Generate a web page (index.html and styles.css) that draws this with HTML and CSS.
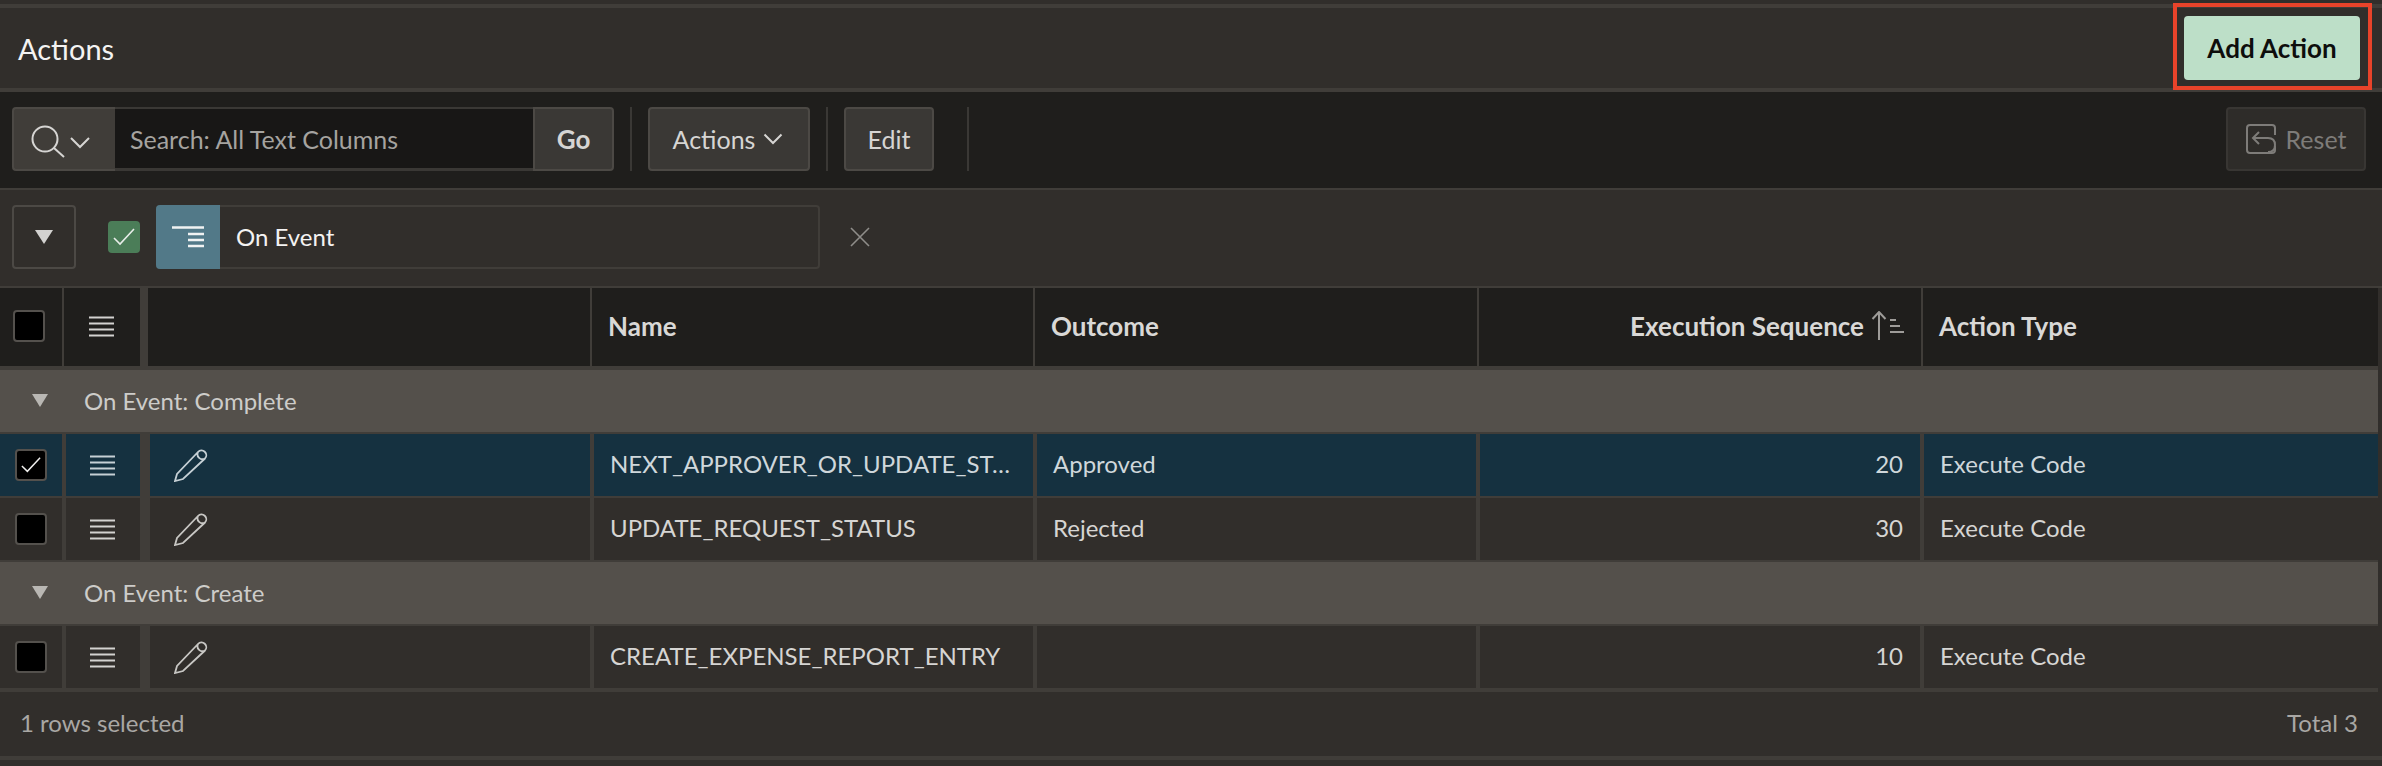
FILE: index.html
```html
<!DOCTYPE html>
<html lang="en">
<head>
<meta charset="utf-8">
<title>Actions</title>
<link rel="stylesheet" href="styles.css">
</head>
<body>
<section class="region">
  <header class="title-bar">
    <h2 class="title">Actions</h2>
    <div class="add-wrap">
      <button class="add-btn">Add Action</button>
      <span class="callout"></span>
    </div>
  </header>

  <div class="toolbar">
    <div class="search">
      <button class="search-btn">
        <svg class="ico-search" width="68" height="48" viewBox="0 0 68 48"><circle cx="21" cy="24" r="12.5"/><path d="M30 33 L40 42"/><path d="M47 23 L56 32 L65 23"/></svg>
      </button>
      <div class="search-input">Search: All Text Columns</div>
      <button class="btn go">Go</button>
    </div>
    <span class="tsep"></span>
    <button class="btn actions">Actions
      <svg class="chev" width="20" height="12" viewBox="0 0 20 12"><path d="M1.5 1.5 L10 10 L18.5 1.5"/></svg>
    </button>
    <span class="tsep"></span>
    <button class="btn edit">Edit</button>
    <span class="tsep wide"></span>
    <button class="btn reset">
      <svg class="ico-reset" width="30" height="30" viewBox="0 0 30 30"><path d="M15 1 H26 Q29 1 29 4 V11 M29 22 V26 Q29 29 26 29 H4 Q1 29 1 26 V4 Q1 1 4 1 H15"/><path d="M13 8 L7 14 L13 20 M7 14 H22 Q29 14 29 21 Q29 28 22 28"/></svg>
      Reset
    </button>
  </div>

  <div class="filters">
    <button class="collapse"><span class="tri"></span></button>
    <span class="green-check">
      <svg width="22" height="18" viewBox="0 0 22 18"><path d="M1 10 L7 16 L21 1"/></svg>
    </span>
    <div class="filter-chip">
      <span class="chip-icon">
        <svg width="34" height="22" viewBox="0 0 34 22"><path d="M1 1.5 H33 M17 8 H33 M17 14 H33 M17 20 H33"/></svg>
      </span>
      <span class="chip-text">On Event</span>
    </div>
    <svg class="close" width="20" height="20" viewBox="0 0 20 20"><path d="M1 1 L19 19 M19 1 L1 19"/></svg>
  </div>

  <div class="grid-row head">
    <div class="cell"><span class="box head-box"></span></div>
    <div class="cell center"><svg class="ico-menu" width="26" height="22" viewBox="0 0 26 22"><path d="M0 2.5 H25 M0 8.5 H25 M0 14.5 H25 M0 20.5 H25"/></svg></div>
    <div class="cell"></div>
    <div class="cell text">Name</div>
    <div class="cell text">Outcome</div>
    <div class="cell text right">Execution Sequence
      <svg class="ico-sort" width="34" height="30" viewBox="0 0 34 30"><path class="sort-a" d="M8 29 V1 M1.5 8 L8 1 L14.500 8"/><path class="sort-b" d="M19 9 H25 M19 15 H29 M19 21 H33"/></svg>
    </div>
    <div class="cell text">Action Type</div>
  </div>

  <div class="group"><span class="tri small"></span>On Event: Complete</div>

  <div class="grid-row data selected">
    <div class="cell"><span class="box"><svg width="22" height="18" viewBox="0 0 22 18"><path d="M1 10 L7 16 L21 1"/></svg></span></div>
    <div class="cell center"><svg class="ico-menu" width="26" height="22" viewBox="0 0 26 22"><path d="M0 2.5 H25 M0 8.5 H25 M0 14.5 H25 M0 20.500 H25"/></svg></div>
    <div class="cell pencil"><svg class="ico-pencil" width="34" height="34" viewBox="0 0 34 34"><path d="M1 33 L3 26 L24 4 A4.700 4.700 0 0 1 31 10.500 L9 31 Z M24 4 A5 5 0 0 0 31 10.500"/></svg></div>
    <div class="cell value ellipsis">NEXT_APPROVER_OR_UPDATE_STATUS</div>
    <div class="cell value">Approved</div>
    <div class="cell value right">20</div>
    <div class="cell value">Execute Code</div>
  </div>

  <div class="grid-row data">
    <div class="cell"><span class="box"></span></div>
    <div class="cell center"><svg class="ico-menu" width="26" height="22" viewBox="0 0 26 22"><path d="M0 2.5 H25 M0 8.5 H25 M0 14.5 H25 M0 20.500 H25"/></svg></div>
    <div class="cell pencil"><svg class="ico-pencil" width="34" height="34" viewBox="0 0 34 34"><path d="M1 33 L3 26 L24 4 A4.700 4.700 0 0 1 31 10.500 L9 31 Z M24 4 A5 5 0 0 0 31 10.500"/></svg></div>
    <div class="cell value ellipsis">UPDATE_REQUEST_STATUS</div>
    <div class="cell value">Rejected</div>
    <div class="cell value right">30</div>
    <div class="cell value">Execute Code</div>
  </div>

  <div class="group"><span class="tri small"></span>On Event: Create</div>

  <div class="grid-row data last">
    <div class="cell"><span class="box"></span></div>
    <div class="cell center"><svg class="ico-menu" width="26" height="22" viewBox="0 0 26 22"><path d="M0 2.5 H25 M0 8.5 H25 M0 14.5 H25 M0 20.500 H25"/></svg></div>
    <div class="cell pencil"><svg class="ico-pencil" width="34" height="34" viewBox="0 0 34 34"><path d="M1 33 L3 26 L24 4 A4.700 4.700 0 0 1 31 10.500 L9 31 Z M24 4 A5 5 0 0 0 31 10.500"/></svg></div>
    <div class="cell value ellipsis">CREATE_EXPENSE_REPORT_ENTRY</div>
    <div class="cell value"></div>
    <div class="cell value right">10</div>
    <div class="cell value">Execute Code</div>
  </div>

  <footer class="footer">
    <span>1 rows selected</span>
    <span>Total 3</span>
  </footer>
</section>
</body>
</html>
```

FILE: styles.css
```css
* { box-sizing: border-box; }
html, body { margin: 0; height: 100%; }
body {
  background: #312e2b;
  color: #d6d5d3;
  font-family: Lato, "Noto Sans", sans-serif;
  font-size: 24px;
  overflow: hidden;
}
button { font: inherit; color: inherit; margin: 0; cursor: pointer; }
svg { display: block; fill: none; stroke: currentColor; }

.region { padding-top: 4px; }

.title-bar {
  height: 88px;
  border-top: 4px solid #403d39;
  border-bottom: 4px solid #403d39;
  display: flex;
  align-items: center;
  justify-content: space-between;
  padding: 0 22px 0 18px;
}
.title { margin: 0; font-size: 29px; font-weight: 400; color: #f4f3f2; }
.add-wrap { position: relative; display: flex; }
.add-btn {
  width: 176px;
  height: 64px;
  background: #bddfc8;
  color: #0e0d0c;
  border: 0;
  border-radius: 4px;
  font-size: 26px;
  font-weight: 700;
  padding: 0;
}
.callout {
  position: absolute;
  left: -11px;
  top: -13px;
  width: 199px;
  height: 87px;
  border: 4px solid #e8432a;
}

.toolbar {
  height: 98px;
  background: #1f1e1c;
  border-bottom: 2px solid #403d39;
  display: flex;
  align-items: center;
  padding: 0 16px 2px 12px;
  font-size: 25px;
}
.search { display: flex; height: 64px; }
.search-btn {
  width: 103px;
  background: #403d39;
  border: 2px solid #4c4945;
  border-right: 0;
  border-radius: 4px 0 0 4px;
  padding: 0 0 0 10px;
  color: #d6d5d3;
  display: flex;
  align-items: center;
}
.ico-search { stroke-width: 2; flex: none; }
.search-input {
  width: 418px;
  background: #181716;
  border-top: 2px solid #3a3835;
  border-bottom: 3px solid #3a3835;
  color: #a5a3a0;
  display: flex;
  align-items: center;
  padding-left: 15px;
}
.btn {
  height: 64px;
  background: #3a3835;
  border: 2px solid #4c4945;
  border-radius: 4px;
  color: #d6d5d3;
  padding: 0;
  display: flex;
  align-items: center;
  justify-content: center;
}
.go { width: 81px; font-size: 26px; font-weight: 700; border-radius: 0 4px 4px 0; }
.tsep { width: 2px; height: 64px; background: #3a3835; margin: 0 16px; }
.tsep.wide { margin-left: 33px; }
.actions { width: 162px; gap: 8px; padding-right: 2px; }
.chev { stroke-width: 2; }
.edit { width: 90px; }
.reset {
  margin-left: auto;
  width: 140px;
  background: #2e2c29;
  border-color: #383633;
  color: #7e7c79;
  gap: 10px;
}
.ico-reset { stroke-width: 2; }

.filters {
  height: 98px;
  border-bottom: 2px solid #403d39;
  display: flex;
  align-items: center;
  padding: 0 0 2px 12px;
}
.collapse {
  width: 64px;
  height: 64px;
  background: transparent;
  border: 2px solid #4c4945;
  border-radius: 4px;
  padding: 0;
  display: flex;
  align-items: center;
  justify-content: center;
}
.tri {
  width: 0;
  height: 0;
  border-left: 9px solid transparent;
  border-right: 9px solid transparent;
  border-top: 14px solid #d3d2d0;
}
.green-check {
  width: 32px;
  height: 32px;
  margin-left: 32px;
  margin-right: 16px;
  background: #4b7d58;
  border-radius: 4px;
  color: #e8ede9;
  display: flex;
  align-items: center;
  justify-content: center;
}
.green-check svg, .box svg { stroke-width: 1.6; }
.filter-chip {
  width: 664px;
  height: 64px;
  display: flex;
  border: 2px solid #403d39;
  border-left: 0;
  border-radius: 4px;
}
.chip-icon {
  width: 64px;
  margin: -2px 0;
  background: #527988;
  border-radius: 4px 0 0 4px;
  color: #f0f2f2;
  display: flex;
  align-items: center;
  justify-content: center;
}
.chip-icon svg { stroke-width: 2.4; }
.chip-text {
  display: flex;
  align-items: center;
  padding: 0 0 2px 16px;
  color: #f4f3f2;
}
.close { margin-left: 30px; color: #8f8d8a; stroke-width: 1.6; }

.grid-row {
  display: grid;
  width: 2378px;
}
.cell {
  display: flex;
  align-items: center;
  border-right: 4px solid #403d39;
  min-width: 0;
}
.cell:last-child { border-right: 0; }
.center { justify-content: center; }
.right { justify-content: flex-end; }

.head {
  height: 82px;
  grid-template-columns: 64px 84px 444px 443px 444px 444px 455px;
  background: #1f1e1c;
  border-bottom: 4px solid #403d39;
  font-size: 26px;
}
.head .cell { border-right-width: 2px; padding-bottom: 2px; }
.head .cell:nth-child(2) { border-right-width: 8px; padding-right: 0; }
.head .cell:last-child { border-right: 0; }
.text { font-weight: 700; color: #d9d8d6; padding: 0 16px; }
.text.right { padding-right: 16px; gap: 7px; }
.ico-menu { stroke-width: 2; color: #d3d2d0; }
.ico-sort { color: #9e9c99; flex: none; }
.sort-a { stroke-width: 2; }
.sort-b { stroke-width: 2; }

.box {
  width: 32px;
  height: 32px;
  margin-left: 13px;
  background: #000;
  border: 2px solid #54514d;
  border-radius: 4px;
  display: flex;
  align-items: center;
  justify-content: center;
  color: #f0f0ef;
}
.box svg { width: 20px; }

.group {
  height: 64px;
  width: 2378px;
  background: #54504b;
  border-bottom: 2px solid #403d39;
  display: flex;
  align-items: center;
  color: #cdccc9;
  padding: 0 0 2px 32px;
}
.group .small {
  border-left-width: 8px;
  border-right-width: 8px;
  border-top-width: 13px;
  border-top-color: #b9b7b3;
  margin-right: 36px;
}

.data {
  height: 64px;
  grid-template-columns: 66px 84px 444px 443px 443px 444px 454px;
  border-bottom: 2px solid #403d39;
}
.data .cell:nth-child(2) { border-right-width: 10px; }
.data .box { margin-left: 15px; }
.selected { background: #153140; }
.selected .value { color: #cfd7db; }
.selected .ico-pencil, .selected .ico-menu { color: #c6d0d5; }
.pencil { padding-left: 24px; }
.ico-pencil { color: #c8c7c4; stroke-width: 1.8; }
.value { padding: 0 16px 3px; }
.value.right { padding-right: 17px; }
.ellipsis {
  display: block;
  padding: 0 12px 0 16px;
  line-height: 60px;
  white-space: nowrap;
  overflow: hidden;
  text-overflow: ellipsis;
}
.last { height: 66px; border-bottom: 4px solid #403d39; }

.footer {
  height: 68px;
  border-bottom: 4px solid #403d39;
  display: flex;
  align-items: center;
  justify-content: space-between;
  padding: 0 24px 3px 20px;
  color: #a9a7a4;
}
```
